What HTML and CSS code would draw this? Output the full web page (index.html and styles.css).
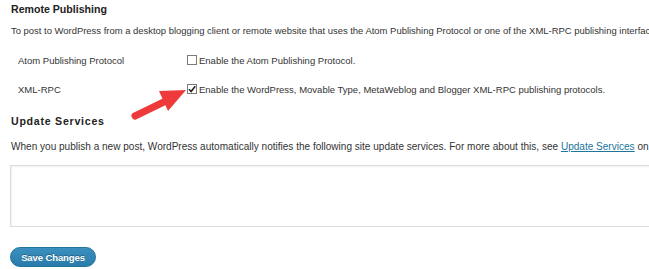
FILE: index.html
```html
<!DOCTYPE html>
<html>
<head>
<meta charset="utf-8">
<link rel="stylesheet" href="styles.css">
</head>
<body>
<div class="wrap">
  <h3 class="section-title first">Remote Publishing</h3>
  <p class="desc desc-remote">To post to WordPress from a desktop blogging client or remote website that uses the Atom Publishing Protocol or one of the XML-RPC publishing interfaces you must enable them below.</p>
  <div class="form-table">
    <div class="row">
      <div class="th">Atom Publishing Protocol</div>
      <div class="td"><span class="cb"></span><span>Enable the Atom Publishing Protocol.</span></div>
    </div>
    <div class="row">
      <div class="th">XML-RPC</div>
      <div class="td"><span class="cb checked"><svg viewBox="0 0 10 10" width="10" height="10"><path d="M2 5.2 L4.2 7.6 L8.2 2.2" fill="none" stroke="#222" stroke-width="1.6"/></svg></span><span>Enable the WordPress, Movable Type, MetaWeblog and Blogger XML-RPC publishing protocols.</span></div>
    </div>
  </div>
  <h3 class="section-title second">Update Services</h3>
  <p class="desc desc-update">When you publish a new post, WordPress automatically notifies the following site update services. For more about this, see <a href="#">Update Services</a> on the Codex. Separate multiple service URLs with line breaks.</p>
  <div class="ping"></div>
  <div class="submit"><button class="btn">Save Changes</button></div>
  <svg class="arrow" width="70" height="45" viewBox="0 0 70 45">
    <line x1="5" y1="36" x2="40" y2="19" stroke="#ee3a3a" stroke-width="7" stroke-linecap="round"/>
    <polygon points="56,10 29,11 38,31" fill="#ee3a3a"/>
  </svg>
</div>
</body>
</html>
```
FILE: styles.css
```css
html, body {
  margin: 0;
  padding: 0;
  background: #fff;
  overflow: hidden;
  width: 649px;
  height: 269px;
}
body {
  font-family: "Liberation Sans", Arial, sans-serif;
  font-size: 9.5px;
  color: #333;
}
.wrap {
  position: relative;
  padding-left: 10px;
  padding-top: 2px;
}
.section-title {
  margin: 0;
  font-size: 10.6px;
  font-weight: bold;
  color: #222;
  padding-left: 1px;
  height: 14px;
  line-height: 14px;
}
.section-title.second {
  letter-spacing: 0.75px;
  margin-top: 18px;
}
.desc {
  margin: 0;
  white-space: nowrap;
  padding-left: 1px;
  line-height: 14px;
}
.desc-remote {
  font-size: 9.45px;
  margin-top: 8px;
}
.desc-update {
  font-size: 10.05px;
  margin-top: 12px;
}
.form-table {
  margin-top: 15px;
  display: flex;
  flex-direction: column;
  gap: 15px;
}
.row {
  display: flex;
  align-items: center;
  height: 14px;
}
.th {
  width: 177px;
  padding-left: 8px;
  box-sizing: border-box;
  color: #333;
}
.td {
  display: flex;
  align-items: center;
  white-space: nowrap;
}
.cb {
  width: 10px;
  height: 10px;
  border: 1px solid #7a7a7a;
  box-sizing: border-box;
  margin-right: 2px;
  background: #fff;
  display: inline-flex;
  position: relative;
}
.cb svg {
  position: absolute;
  left: -1px;
  top: -1px;
}
a {
  color: #21759b;
  text-decoration: underline;
}
.ping {
  margin-top: 11px;
  height: 62px;
  border: 1px solid #dcdcdc;
  border-right: none;
  box-shadow: inset 1px 1px 2px rgba(0,0,0,0.06);
  background: #fff;
  box-sizing: border-box;
}
.submit {
  margin-top: 20px;
}
.btn {
  width: 86px;
  height: 20px;
  border-radius: 10px;
  border: 1px solid #21759b;
  background: linear-gradient(#3a90be, #2a7bab);
  color: #fff;
  font-family: "Liberation Sans", Arial, sans-serif;
  font-size: 9.5px;
  font-weight: bold;
  padding: 0;
  text-shadow: 0 -1px 0 rgba(0,0,0,0.3);
  letter-spacing: -0.1px;
}
.arrow {
  position: absolute;
  left: 130px;
  top: 80px;
}
```
